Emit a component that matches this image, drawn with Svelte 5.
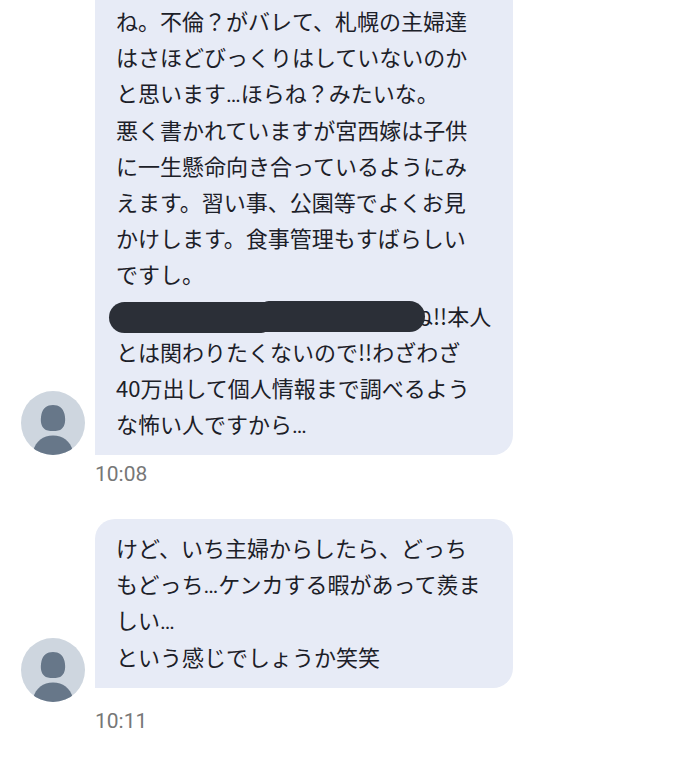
<script>
  const messages = [
    {
      time: '10:08',
      continued: true,
      paragraphs: [
        { lines: ['ね。不倫？がバレて、札幌の主婦達', 'はさほどびっくりはしていないのか', 'と思います…ほらね？みたいな。'] },
        {
          lines: [
            '悪く書かれていますが宮西嫁は子供',
            'に一生懸命向き合っているようにみ',
            'えます。習い事、公園等でよくお見',
            'かけします。食事管理もすばらしい',
            'ですし。'
          ]
        },
        {
          redacted: true,
          lines: ['ね!!本人', 'とは関わりたくないので!!わざわざ', '40万出して個人情報まで調べるよう', 'な怖い人ですから…']
        }
      ]
    },
    {
      time: '10:11',
      trailing: true,
      paragraphs: [
        { lines: ['けど、いち主婦からしたら、どっち', 'もどっち…ケンカする暇があって羨ま', 'しい…'] },
        { lines: ['という感じでしょうか笑笑'] }
      ]
    }
  ];
</script>

<main>
  {#each messages as message, m}
    <article>
      <div class="row">
        <svg class="avatar" viewBox="0 0 64 64" aria-hidden="true">
          <defs>
            <clipPath id="avatar-{m}"><circle cx="32" cy="32" r="32" /></clipPath>
          </defs>
          <g clip-path="url(#avatar-{m})">
            <rect width="64" height="64" fill="#ced6df" />
            <path
              fill="#677789"
              d="M32 14C38 14 42 17 43.500 23C45 30 44 35 40.500 38C38 40.700 26 40.700 23.500 38C20 35 19 30 20.500 23C22 17 26 14 32 14Z"
            />
            <path fill="#677789" d="M12 60C15 50 22 44.500 32 44.500C42 44.500 49 50 52 60V64H12Z" />
          </g>
        </svg>
        <div class="bubble" class:continued={message.continued} class:trailing={message.trailing}>
          {#each message.paragraphs as paragraph}
            <p class:redacted={paragraph.redacted}>
              {#if paragraph.redacted}<span class="marker"></span>{/if}{#each paragraph.lines as line, i}{#if i > 0}<br />{/if}{#each line.split('…') as part, n}{#if n > 0}<span class="dots">…</span>{/if}{part}{/each}{/each}
            </p>
          {/each}
        </div>
      </div>
      <time>{message.time}</time>
    </article>
  {/each}
</main>

<style>
  :global(body) {
    margin: 0;
    background: #fff;
  }

  main {
    display: flex;
    flex-direction: column;
    gap: 26px;
    padding: 0 21px 17px;
    font-family: 'Noto Sans CJK JP', sans-serif;
    color: #1c2028;
  }

  .row {
    display: flex;
    align-items: flex-end;
    gap: 10px;
  }

  .avatar {
    flex: none;
    width: 64px;
    height: 64px;
  }

  .bubble {
    box-sizing: border-box;
    flex: 0 1 418px;
    display: flex;
    flex-direction: column;
    gap: 1px;
    padding: 10px 0 14px 21px;
    border-radius: 20px 20px 20px 0;
    background: #e7ebf6;
    font-size: 22px;
    line-height: 36px;
    white-space: nowrap;
  }

  .continued {
    padding-top: 2px;
    border-radius: 0 0 20px 0;
  }

  .trailing {
    margin-bottom: 14px;
  }

  p {
    margin: 0;
  }

  .dots {
    font-family: Roboto, sans-serif;
    line-height: 1;
  }

  .redacted {
    margin-top: 5px;
  }

  .marker {
    position: relative;
    display: inline-block;
    width: 316px;
    height: 32px;
    margin: 4px -14px 0 -7px;
    vertical-align: top;
  }

  .marker::before,
  .marker::after {
    content: '';
    position: absolute;
    height: 31px;
    background: #2b2f37;
  }

  .marker::before {
    top: 1px;
    left: 0;
    width: 160px;
    border-radius: 16px 0 8px 16px;
  }

  .marker::after {
    top: 0;
    right: 0;
    width: 164px;
    border-radius: 8px 16px 16px 0;
  }

  time {
    display: block;
    margin-left: 74px;
    font-family: Roboto, sans-serif;
    font-size: 21px;
    line-height: 38px;
    color: #777;
  }
</style>
